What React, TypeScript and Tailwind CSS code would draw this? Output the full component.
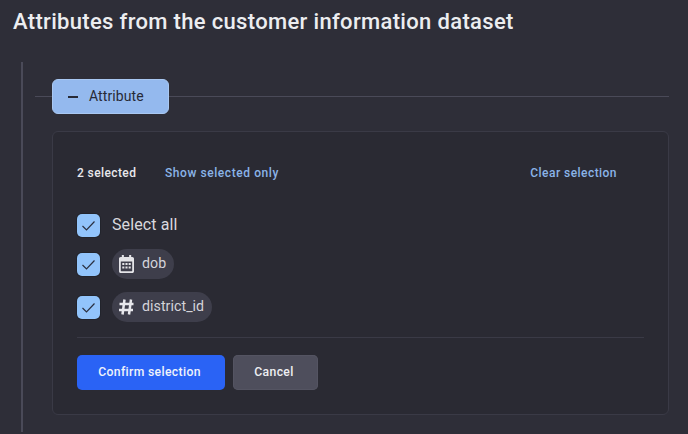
import React from "react";

function Check() {
  return (
    <span className="flex h-[23px] w-[23px] shrink-0 items-center justify-center rounded-[5px] bg-[#92c4fb] shadow-[0_0_0_1px_#22242c]">
      <svg width="15" height="15" viewBox="0 0 15 15" fill="none" stroke="#2a3040" strokeWidth="1.200">
        <path d="M1.500 8 L5.500 12 L13.500 3.500" />
      </svg>
    </span>
  );
}

function Calendar() {
  return (
    <svg width="15" height="18" viewBox="0 0 16 18" className="shrink-0" fill="#e4e4e8" preserveAspectRatio="none">
      <path d="M3 0h2.200v2h5.600V0H13v2h1.200C15.200 2 16 2.800 16 3.800v12.400c0 1-.8 1.800-1.800 1.800H1.800C.8 18 0 17.200 0 16.200V3.800C0 2.800.8 2 1.800 2H3V0zM1.900 6.400v9.300c0 .3.2.5.5.5h11.200c.3 0 .5-.2.5-.5V6.400H1.900z" />
      <path d="M3.500 8h2.200v2H3.500zM6.900 8h2.200v2H6.900zM10.300 8h2.200v2h-2.200zM3.500 11.500h2.200v2H3.500zM6.900 11.500h2.200v2H6.900zM10.300 11.500h2.200v2h-2.200z" />
    </svg>
  );
}

function Hash() {
  return (
    <svg width="15" height="16" viewBox="0 0 15 16" className="shrink-0" fill="none" stroke="#e8e8ec" strokeWidth="2.500">
      <path d="M5.500 0.500 L3.500 15.500 M12 0.500 L10 15.500 M0.500 5 H14.500 M0 11 H14" />
    </svg>
  );
}

function Chip({ icon, label }: { icon: React.ReactNode; label: string }) {
  return (
    <span className="flex h-[30px] items-center gap-[8px] rounded-full bg-[#3e3e4b] pl-[7px] pr-[8px] font-['Roboto',sans-serif] text-[14.200px] tracking-[0.05px] text-[#d4d4da]">
      <span className="flex w-[15px] justify-center">{icon}</span>
      <span>{label}</span>
    </span>
  );
}

export default function App() {
  return (
    <div className="h-[434px] w-[688px] overflow-hidden bg-[#2e2e38] font-['Roboto',sans-serif]">
      <h1 className="pl-[13px] pt-[9px] text-[22px] font-medium leading-[26px] tracking-[0.33px] text-[#ecedf0]">
        Attributes from the customer information dataset
      </h1>
      <div className="ml-[21px] mt-[27px] h-[370px] border-l-2 border-[#4a4a58] pl-[12px] pr-[19px] pt-[17px]">
        <div className="flex items-center">
          <div className="h-px w-[17px] bg-[#4a4a58]" />
          <button className="flex h-[35px] w-[117px] items-center gap-[11px] rounded-[6px] border border-[#a9c8f2] bg-[#94b9ee] pl-[15px] text-[14px] tracking-[0.1px] text-[#272a36]">
            <span className="h-[2px] w-[10px] bg-[#272a36]" />
            Attribute
          </button>
          <div className="h-px flex-1 bg-[#4a4a58]" />
        </div>
        <div className="ml-[17px] mt-[17px] h-[284px] rounded-[6px] border border-[#3a3a46] bg-[#2a2a33] px-[24px] pt-[32px]">
          <div className="flex h-[18px] items-center text-[12px] font-medium tracking-[0.45px]">
            <span className="w-[88px] text-[#e8e8ec] tracking-[0.4px]">2 selected</span>
            <span className="tracking-[0.57px] text-[#8ab4e8]">Show selected only</span>
            <span className="ml-auto mr-[27px] text-[#8ab4e8]">Clear selection</span>
          </div>
          <div className="mt-[31px] flex h-[24px] items-center gap-[12px] text-[16px] tracking-[0.1px] text-[#d9d9de]">
            <Check />
            Select all
          </div>
          <div className="mt-[12px] flex h-[30px] items-center gap-[12px]">
            <Check />
            <Chip icon={<Calendar />} label="dob" />
          </div>
          <div className="mt-[13px] flex h-[30px] items-center gap-[12px]">
            <Check />
            <Chip icon={<Hash />} label="district_id" />
          </div>
          <div className="mt-[15px] h-px bg-[#3a3a46]" />
          <div className="mt-[17px] flex gap-[8px] text-[12.200px] font-medium tracking-[0.35px]">
            <button className="h-[35px] w-[148px] rounded-[5px] bg-[#2a63f5] pr-[3px] text-[#f0f3fb]">Confirm selection</button>
            <button className="h-[35px] w-[85px] rounded-[5px] bg-[#4e4e5c] pr-[3px] text-[#eeeef2] [box-shadow:inset_0_0_0_1px_#545462]">Cancel</button>
          </div>
        </div>
      </div>
    </div>
  );
}
